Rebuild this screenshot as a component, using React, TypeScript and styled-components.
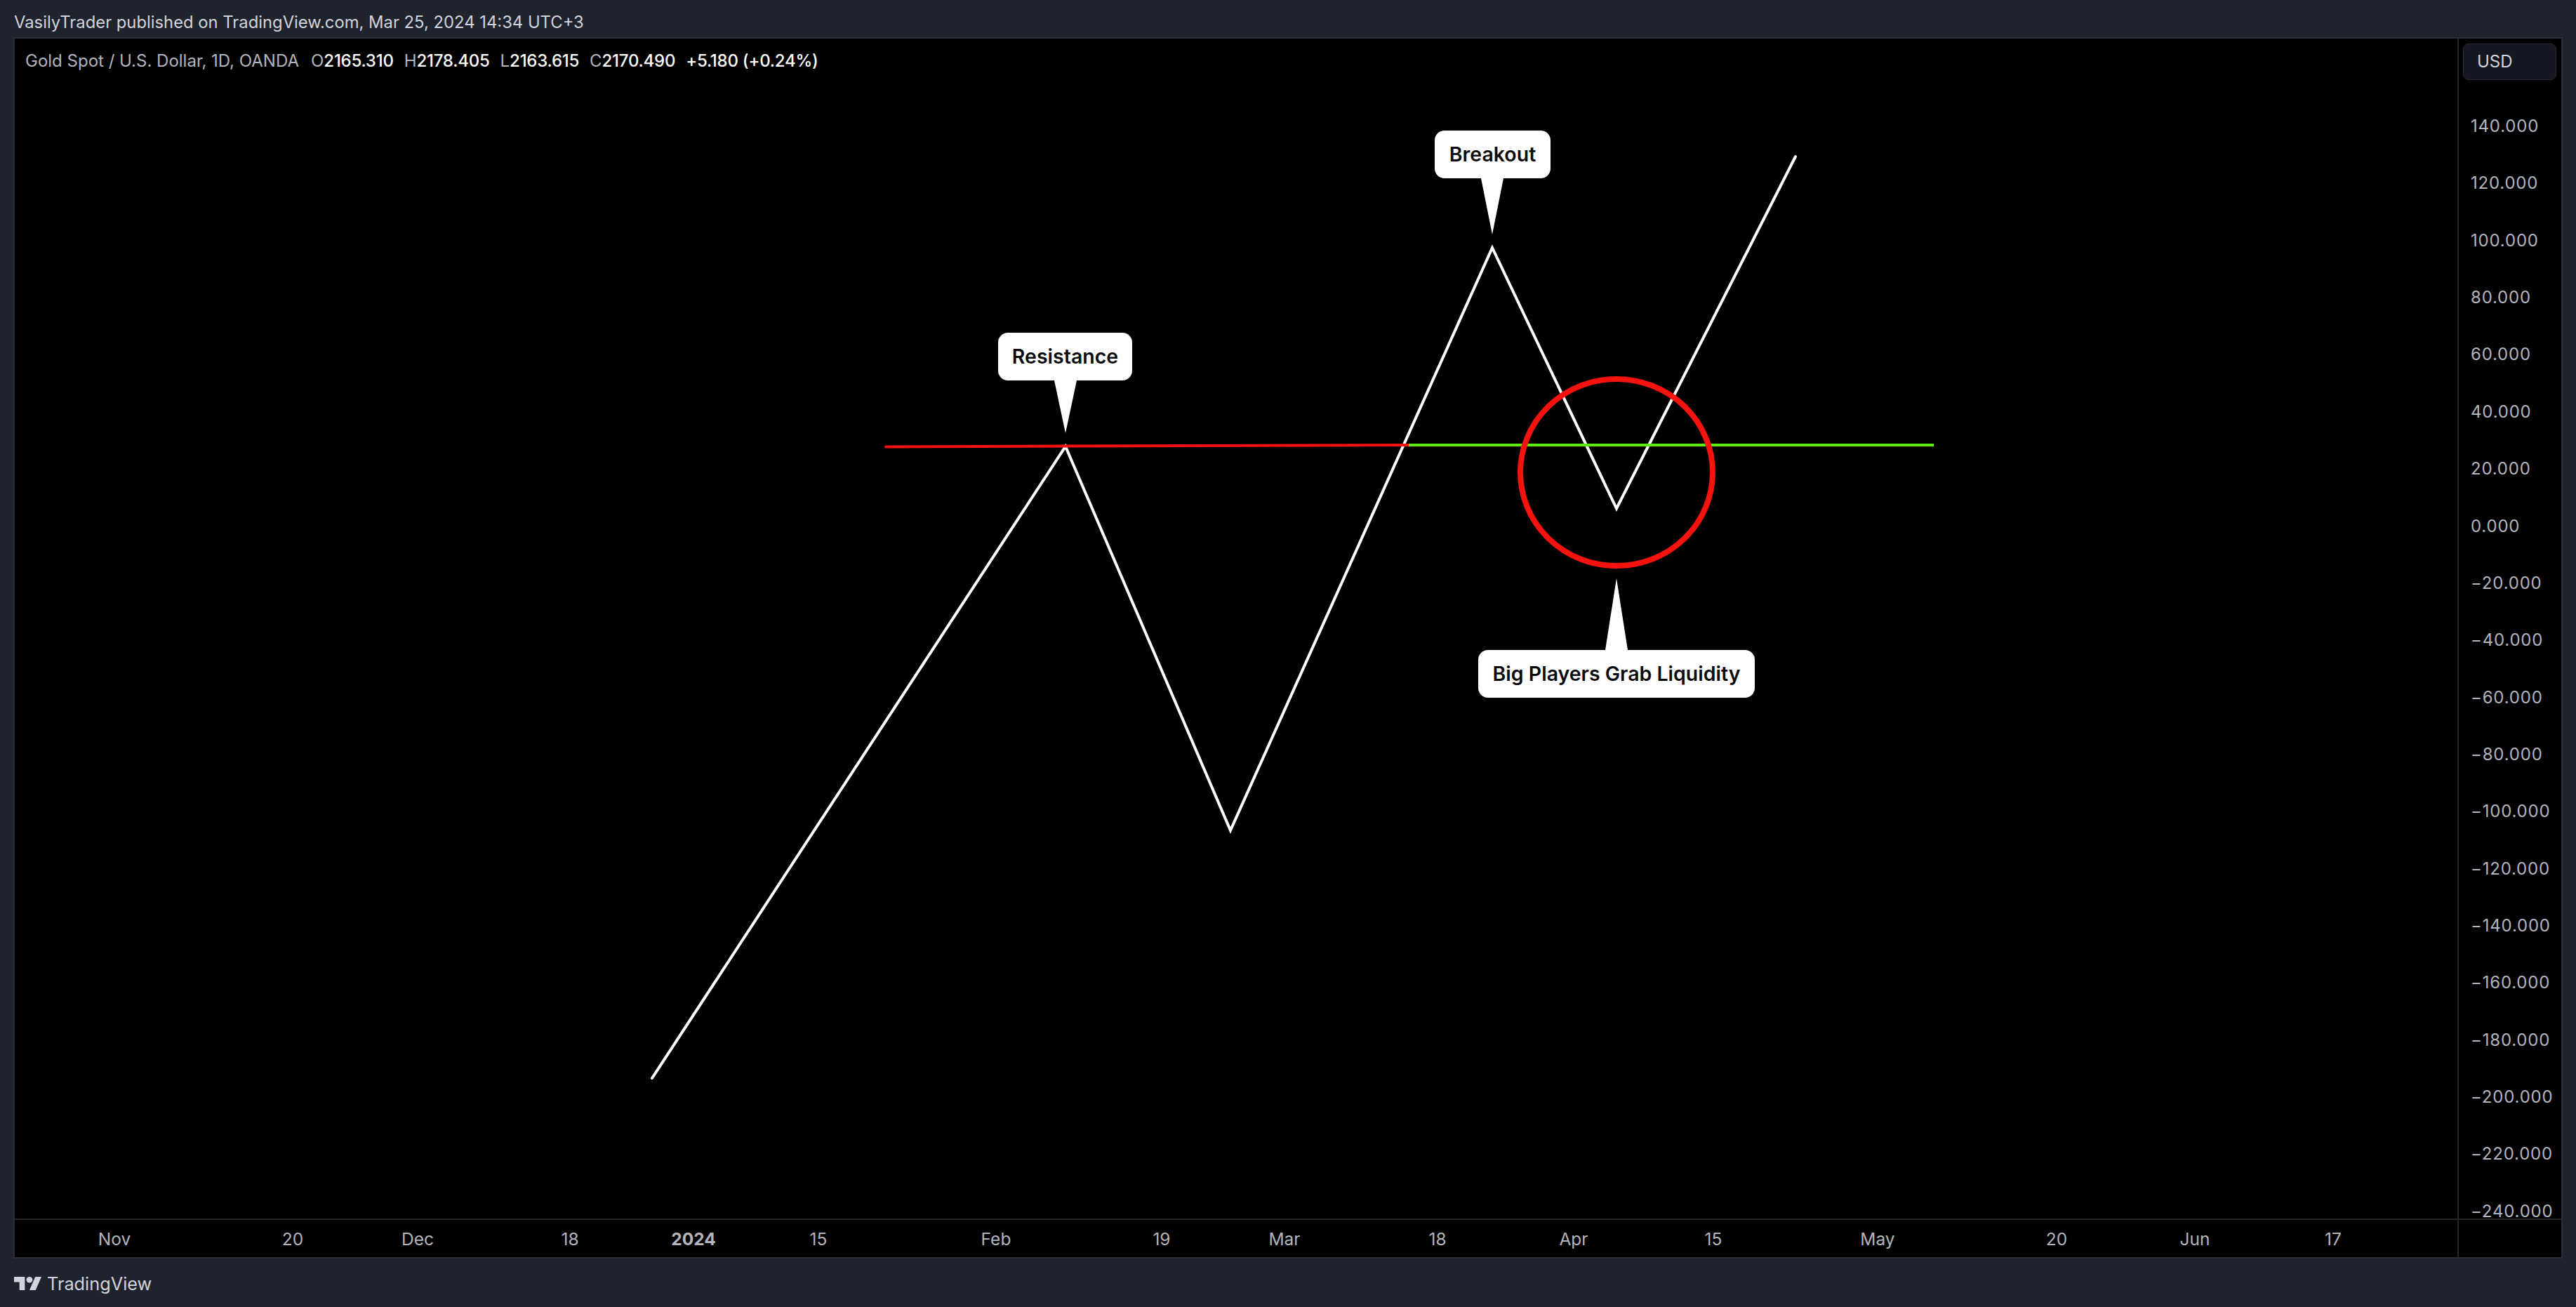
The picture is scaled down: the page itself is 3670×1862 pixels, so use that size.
import React from "react";
import styled, { createGlobalStyle } from "styled-components";

const Global = createGlobalStyle`
  html, body { margin: 0; padding: 0; background: #1f232e; }
  #root { width: 3670px; height: 1862px; }
`;

const Page = styled.div`
  width: 3670px;
  height: 1862px;
  display: flex;
  flex-direction: column;
  background: #1f232e;
  font-family: Inter, "Liberation Sans", sans-serif;
  overflow: hidden;
`;

const Header = styled.header`
  height: 53px;
  flex: none;
  display: flex;
  align-items: center;
  padding: 10px 20px 0;
  box-sizing: border-box;
  color: #d1d4dc;
  font-size: 23.8px;
  white-space: nowrap;
`;

const Frame = styled.main`
  flex: none;
  height: 1740px;
  margin: 0 19px 0 19px;
  box-sizing: border-box;
  border: 2px solid #2a2e39;
  background: #000;
  display: grid;
  grid-template-columns: 1fr 146px;
  grid-template-rows: 1683px 1fr;
`;

const Pane = styled.section`
  position: relative;
  overflow: hidden;
  border-right: 2px solid #262626;
  border-bottom: 2px solid #262626;
`;

const Legend = styled.div`
  position: absolute;
  left: 15px;
  top: 17px;
  display: flex;
  align-items: center;
  height: 28px;
  font-size: 24px;
  font-weight: 400;
  color: #b2b5be;
  white-space: nowrap;
`;

const LegendTitle = styled.span`
  margin-right: 17px;
`;

const Ohlc = styled.span`
  margin-right: 15px;
`;

const OhlcValue = styled.span`
  color: #fff;
  font-weight: 500;
  letter-spacing: -0.25px;
`;

const Drawing = styled.svg`
  position: absolute;
  left: 0;
  top: 0;
  display: block;
`;

const Callout = styled.div<{ $x: number; $y: number; $w: number }>`
  position: absolute;
  left: ${(p) => p.$x}px;
  top: ${(p) => p.$y}px;
  width: ${(p) => p.$w}px;
  height: 68px;
  box-sizing: border-box;
  padding-bottom: 2px;
  border-radius: 14px;
  background: #fff;
  color: #0a0a0a;
  font-size: 28.5px;
  font-weight: 600;
  display: flex;
  align-items: center;
  justify-content: center;
  white-space: nowrap;
`;

const PriceAxis = styled.aside`
  border-bottom: 2px solid #262626;
  padding: 7px 7px 0 6px;
  box-sizing: border-box;
  height: 1683px;
`;

const CurrencyButton = styled.div`
  height: 52px;
  box-sizing: border-box;
  border: 1px solid #2a2e39;
  border-radius: 8px;
  background: #131722;
  color: #d1d4dc;
  font-size: 24px;
  display: flex;
  align-items: center;
  padding: 0 0 1px 19px;
  margin-bottom: 55px;
`;

const PriceList = styled.ul`
  list-style: none;
  margin: 0;
  padding: 0 0 0 11px;
  display: flex;
  flex-direction: column;
  gap: 59.37px;
`;

const PriceLabel = styled.li`
  height: 22px;
  line-height: 22px;
  color: #b2b5be;
  font-size: 24px;
  letter-spacing: 0.8px;
  white-space: nowrap;
`;

const TimeAxis = styled.nav`
  display: flex;
  align-items: center;
  border-right: 2px solid #262626;
`;

const TimeTick = styled.span<{ $bold?: boolean }>`
  flex: none;
  width: 100px;
  text-align: center;
  color: #b2b5be;
  font-size: 24.5px;
  font-weight: ${(p) => (p.$bold ? 700 : 400)};
  white-space: nowrap;
`;

const AxisCorner = styled.div``;

const Footer = styled.footer`
  flex: 1;
  display: flex;
  align-items: center;
  gap: 8px;
  padding: 1px 20px 0;
  color: #d1d4dc;
  font-size: 25.3px;
  font-weight: 400;
`;

const Logo = styled.svg`
  flex: none;
  display: block;
`;

const prices = [140, 120, 100, 80, 60, 40, 20, 0, -20, -40, -60, -80, -100, -120, -140, -160, -180, -200, -220, -240];
const fmt = (v: number) => (v < 0 ? "\u2212" : "") + Math.abs(v).toFixed(3);

const ticks: { t: string; x: number; bold?: boolean }[] = [
  { t: "Nov", x: 163 },
  { t: "20", x: 417 },
  { t: "Dec", x: 595 },
  { t: "18", x: 812 },
  { t: "2024", x: 988, bold: true },
  { t: "15", x: 1166 },
  { t: "Feb", x: 1419 },
  { t: "19", x: 1655 },
  { t: "Mar", x: 1830 },
  { t: "18", x: 2048 },
  { t: "Apr", x: 2242 },
  { t: "15", x: 2441 },
  { t: "May", x: 2675 },
  { t: "20", x: 2930 },
  { t: "Jun", x: 3127 },
  { t: "17", x: 3324 },
];

// Frame content starts at page (21, 55); drawing coordinates below are page coordinates.
const OX = 21;
const OY = 55;
const TICK_W = 100;
const tickMargin = (i: number) =>
  i === 0 ? ticks[0].x - TICK_W / 2 - OX : ticks[i].x - ticks[i - 1].x - TICK_W;

const Tail = ({ d }: { d: string }) => <path d={d} fill="#fff" />;

export default function App() {
  return (
    <Page>
      <Global />
      <Header>VasilyTrader published on TradingView.com, Mar 25, 2024 14:34 UTC+3</Header>
      <Frame>
        <Pane>
          <Drawing width="3482" height="1681" viewBox={`${OX} ${OY} 3482 1681`}>
            <polyline
              points="929,1536 1518,636 1753,1183 2126,353 2303,724.5 2558,223"
              fill="none"
              stroke="#fff"
              strokeWidth="4"
              strokeLinecap="round"
              strokeLinejoin="miter"
            />
            <line x1="1262" y1="636.5" x2="2007" y2="634" stroke="#f6120f" strokeWidth="4" strokeLinecap="round" />
            <line x1="2007" y1="634" x2="2755" y2="634" stroke="#5ded12" strokeWidth="4" />
            <ellipse cx="2303" cy="673" rx="137" ry="133" fill="none" stroke="#f6120f" strokeWidth="8" />
            <Tail d="M1502,542 L1534,542 L1518,617 Z" />
            <Tail d="M2110,254 L2142,254 L2126,334 Z" />
            <Tail d="M2287,926 L2319,926 L2303,824 Z" />
          </Drawing>
          <Callout $x={1422 - OX} $y={474 - OY} $w={191}>Resistance</Callout>
          <Callout $x={2044 - OX} $y={186 - OY} $w={165}>Breakout</Callout>
          <Callout $x={2106 - OX} $y={926 - OY} $w={394}>Big Players Grab Liquidity</Callout>
          <Legend>
            <LegendTitle>Gold Spot / U.S. Dollar, 1D, OANDA</LegendTitle>
            <Ohlc>O<OhlcValue>2165.310</OhlcValue></Ohlc>
            <Ohlc>H<OhlcValue>2178.405</OhlcValue></Ohlc>
            <Ohlc>L<OhlcValue>2163.615</OhlcValue></Ohlc>
            <Ohlc>C<OhlcValue>2170.490</OhlcValue></Ohlc>
            <OhlcValue>+5.180 (+0.24%)</OhlcValue>
          </Legend>
        </Pane>
        <PriceAxis>
          <CurrencyButton>USD</CurrencyButton>
          <PriceList>
            {prices.map((p) => (
              <PriceLabel key={p}>{fmt(p)}</PriceLabel>
            ))}
          </PriceList>
        </PriceAxis>
        <TimeAxis>
          {ticks.map((k, i) => (
            <TimeTick key={k.t + k.x} $bold={k.bold} style={{ marginLeft: tickMargin(i) }}>
              {k.t}
            </TimeTick>
          ))}
        </TimeAxis>
        <AxisCorner />
      </Frame>
      <Footer>
        <Logo width="39" height="19" viewBox="0 4 35.5 18" preserveAspectRatio="none" fill="#d1d4dc">
          <path d="M14 22H7V11H0V4h14v18zM28 22h-8l7.5-18h8L28 22z" />
          <circle cx="20" cy="8" r="4" />
        </Logo>
        TradingView
      </Footer>
    </Page>
  );
}
